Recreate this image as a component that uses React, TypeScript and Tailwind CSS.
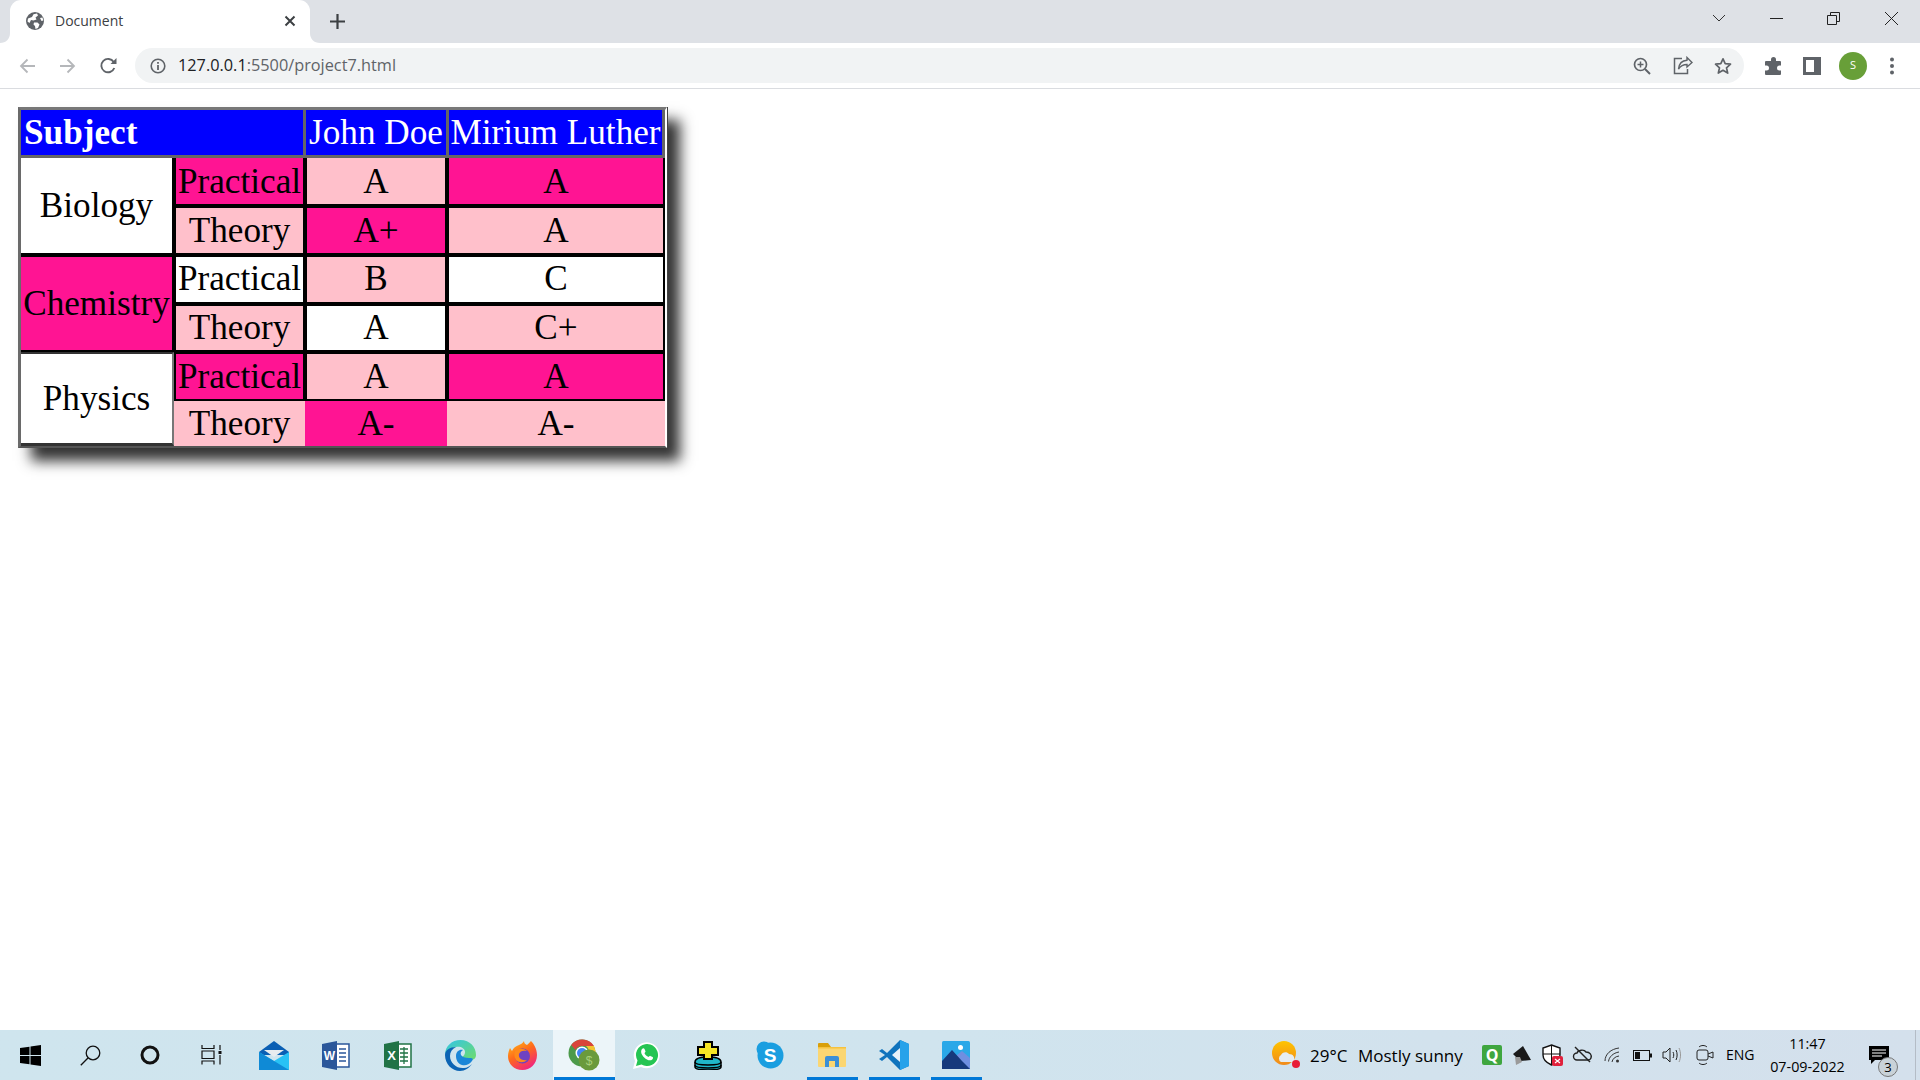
import React from "react";

const sans = "font-['Open_Sans','Noto_Sans',sans-serif]";

function Cell({ className = "", children, rowSpan, colSpan }: { className?: string; children?: React.ReactNode; rowSpan?: number; colSpan?: number }) {
  return (
    <td rowSpan={rowSpan} colSpan={colSpan} className={`p-0 text-center align-middle text-black border-solid ${className}`}>
      {children}
    </td>
  );
}

const inner = "border-x-2 border-y-2 border-black";
const first = "border-x-2 border-b-2 border-t-0 border-black";
const P = "bg-[#ff1493]";
const L = "bg-[#ffc0cb]";
const W = "bg-white";

function ResultsTable() {
  return (
    <table className="table-fixed w-[649px] border-separate border-spacing-0 border-solid border-l-[3px] border-t-[3px] border-b-[2px] border-r-[2px] border-l-[#6a6a6a] border-t-[#777777] border-b-[#555555] border-r-white shadow-[1px_0_0_#444444,13px_13px_13px_#333333] font-['Liberation_Serif',serif] text-[35.2px] leading-[40px]">
      <colgroup>
        <col className="w-[153px]" />
        <col className="w-[131px]" />
        <col className="w-[142px]" />
        <col className="w-[218px]" />
      </colgroup>
      <tbody>
        <tr className="h-[48px]">
          <th colSpan={2} className="p-0 pl-[3px] text-left font-bold text-white bg-[#0000ff] border-solid border-r-2 border-b-[3px] border-[#666666]">Subject</th>
          <th className="p-0 text-center font-normal text-white bg-[#0000ff] border-solid border-l border-r border-b-[3px] border-[#666666]">John Doe</th>
          <th className="p-0 text-center font-normal text-white bg-[#0000ff] border-solid border-l-2 border-r-[3px] border-b-[3px] border-[#666666]">Mirium Luther</th>
        </tr>
        <tr className="h-[48px]">
          <Cell rowSpan={2} className={`${W} border-r-2 border-b-2 border-black`}>Biology</Cell>
          <Cell className={`${P} ${first} pt-[2px]`}>Practical</Cell>
          <Cell className={`${L} ${first} pt-[2px]`}>A</Cell>
          <Cell className={`${P} ${first} pt-[2px]`}>A</Cell>
        </tr>
        <tr className="h-[49px]">
          <Cell className={`${L} ${inner}`}>Theory</Cell>
          <Cell className={`${P} ${inner}`}>A+</Cell>
          <Cell className={`${L} ${inner}`}>A</Cell>
        </tr>
        <tr className="h-[49px]">
          <Cell rowSpan={2} className={`${P} border-r-2 border-y-2 border-black`}>Chemistry</Cell>
          <Cell className={`${W} ${inner} pb-[2px]`}>Practical</Cell>
          <Cell className={`${L} ${inner} pb-[2px]`}>B</Cell>
          <Cell className={`${W} ${inner} pb-[2px]`}>C</Cell>
        </tr>
        <tr className="h-[48px]">
          <Cell className={`${L} ${inner}`}>Theory</Cell>
          <Cell className={`${W} ${inner}`}>A</Cell>
          <Cell className={`${L} ${inner}`}>C+</Cell>
        </tr>
        <tr className="h-[49px]">
          <Cell rowSpan={2} className={`${W} border-t-2 border-r-2 border-b-[3px] border-t-[#333333] border-r-[#777777] border-b-[#333333]`}>Physics</Cell>
          <Cell className={`${P} ${inner}`}>Practical</Cell>
          <Cell className={`${L} ${inner}`}>A</Cell>
          <Cell className={`${P} ${inner}`}>A</Cell>
        </tr>
        <tr className="h-[45px]">
          <Cell className={L}>Theory</Cell>
          <Cell className={P}>A-</Cell>
          <Cell className={L}>A-</Cell>
        </tr>
      </tbody>
    </table>
  );
}

function TabBar() {
  return (
    <div className="flex h-[43px] bg-[#dee1e6] items-stretch">
      <div className="w-[10px]" />
      <div className={`relative w-[300px] bg-white rounded-t-[11px] flex items-center pl-[16px] pb-[1px] ${sans}`}>
        <svg className="absolute left-[-10px] bottom-0" width="10" height="10" viewBox="0 0 10 10"><path d="M10 0V10H0C6 10 10 6 10 0Z" fill="#fff" /></svg>
        <svg className="absolute right-[-10px] bottom-0" width="10" height="10" viewBox="0 0 10 10"><path d="M0 0V10H10C4 10 0 6 0 0Z" fill="#fff" /></svg>
        <svg width="18" height="18" viewBox="0 0 18 18">
          <circle cx="9" cy="9" r="9" fill="#5f6368" />
          <path d="M2 6.500 6 5 7.500 2.200 11 1.500 12 3.500 9.500 5.500 10.500 7.500 7.500 8.500 5 8 3.500 11 1.500 9.500ZM8 10.500l3.500 0 2 2-1.500 3.500-2.500 1-.5-3-1.500-1.500ZM14 6l2.500-.5.800 3-1.800.5Z" fill="#fff" />
        </svg>
        <span className="ml-[11px] text-[14px] text-[#3c4043] leading-none pb-[1px]">Document</span>
        <svg className="ml-auto mr-[14px]" width="12" height="12" viewBox="0 0 12 12"><path d="M1.500 1.500 10.500 10.500M10.500 1.500 1.500 10.500" stroke="#3c4043" strokeWidth="2" /></svg>
      </div>
      <div className="w-[20px]" />
      <div className="flex items-center">
        <svg width="15" height="15" viewBox="0 0 15 15"><path d="M7.500 0V15M0 7.500H15" stroke="#3c4043" strokeWidth="2.200" /></svg>
      </div>
      <div className="ml-auto flex items-start">
        <svg className="mt-[13px] mr-[44px]" width="14" height="10" viewBox="0 0 14 10"><path d="M1 2 7 8 13 2" stroke="#333" fill="none" /></svg>
        <svg className="mt-[12px] mr-[44px]" width="13" height="13" viewBox="0 0 13 13"><path d="M0 6.500H13" stroke="#222" /></svg>
        <svg className="mt-[12px] mr-[45px]" width="13" height="13" viewBox="0 0 13 13" fill="none"><path d="M.5 3.500H9.500V12.500H.5ZM3.500 3.500V.5H12.500V9.500H9.500" stroke="#222" /></svg>
        <svg className="mt-[12px] mr-[22px]" width="13" height="13" viewBox="0 0 13 13"><path d="M0 0 13 13M13 0 0 13" stroke="#222" /></svg>
      </div>
    </div>
  );
}

function Toolbar() {
  const g = "#5f6368";
  return (
    <div className="flex items-center h-[46px] bg-white border-b border-[#dadce0]">
      <svg className="ml-[19px]" width="17" height="16" viewBox="0 0 17 16" fill="none"><path d="M16 8H2M8.500 1.500 2 8l6.500 6.500" stroke="#b5b7ba" strokeWidth="1.800" /></svg>
      <svg className="ml-[23px]" width="17" height="16" viewBox="0 0 17 16" fill="none"><path d="M1 8H15M8.500 1.500 15 8l-6.500 6.500" stroke="#b5b7ba" strokeWidth="1.800" /></svg>
      <svg className="ml-[24px]" width="17" height="17" viewBox="0 0 17 17" fill="none"><path d="M14.300 11a6.700 6.700 0 1 1-.6-6" stroke={g} strokeWidth="1.900" /><path d="M16.500 1v6h-6Z" fill={g} /></svg>
      <div className="ml-[18px] mr-[21px] flex-1 h-[35px] rounded-full bg-[#f1f3f4] flex items-center pl-[15px] pr-[12px]">
        <svg width="16" height="16" viewBox="0 0 16 16" fill="none"><circle cx="8" cy="8" r="6.800" stroke={g} strokeWidth="1.600" /><path d="M8 7v5M8 4v1.800" stroke={g} strokeWidth="1.800" /></svg>
        <span className={`ml-[12px] text-[16.3px] leading-none text-[#5f6368] ${sans}`}><span className="text-[#202124]">127.0.0.1</span>:5500/project7.html</span>
        <svg className="ml-auto" width="18" height="18" viewBox="0 0 18 18" fill="none"><circle cx="7.500" cy="7.500" r="6" stroke={g} strokeWidth="1.700" /><path d="M12 12l5 5" stroke={g} strokeWidth="2" /><path d="M7.500 4.500v6M4.500 7.500h6" stroke={g} strokeWidth="1.500" /></svg>
        <svg className="ml-[22px]" width="20" height="19" viewBox="0 0 20 19" fill="none"><path d="M14 1.500 19 6.500 14 11V8.500C9.500 8.500 7.500 10 5.500 13 6 8 9 4.500 14 4.200Z" stroke={g} strokeWidth="1.400" /><path d="M9 2.500H1.500V17.500H14.500V13" stroke={g} strokeWidth="1.500" /></svg>
        <svg className="ml-[21px]" width="18" height="18" viewBox="0 0 18 18" fill="none"><path d="M9 1.800l2.200 4.900 5.300.5-4 3.600 1.200 5.300L9 13.300l-4.700 2.800 1.200-5.300-4-3.600 5.300-.5Z" stroke={g} strokeWidth="1.700" strokeLinejoin="round" /></svg>
      </div>
      <svg width="18" height="18" viewBox="0 0 18 18"><path d="M6 2.500a2.500 2.500 0 0 1 5 0V4h4a1 1 0 0 1 1 1v3.500h-1.500a2.500 2.500 0 0 0 0 5H16V17a1 1 0 0 1-1 1H1a1 1 0 0 1-1-1v-3.500h1.500a2.500 2.500 0 0 0 0-5H0V5a1 1 0 0 1 1-1h5Z" fill={g} /></svg>
      <div className="ml-[20px] w-[18px] h-[18px] border-[3px] border-[#5f6368] flex justify-end"><div className="w-[4px] h-full bg-[#5f6368]" /></div>
      <div className={`ml-[18px] w-[28px] h-[28px] rounded-full bg-[#689f38] flex items-center justify-center text-white text-[11px] ${sans}`}>S</div>
      <svg className="ml-[23px] mr-[26px]" width="4" height="18" viewBox="0 0 4 18" fill={g}><circle cx="2" cy="2.500" r="2" /><circle cx="2" cy="9" r="2" /><circle cx="2" cy="15.500" r="2" /></svg>
    </div>
  );
}

function Item({ w, children, active, line }: { w: string; children: React.ReactNode; active?: boolean; line?: string }) {
  return (
    <div className={`relative h-full flex items-center justify-center shrink-0 ${w} ${active ? "bg-[#ecf5f9]" : ""}`}>
      {children}
      {line && <div className={`absolute bottom-0 h-[3px] bg-[#0078d7] ${line}`} />}
    </div>
  );
}

const appIcons = {
  mail: (
    <svg width="30" height="29" viewBox="0 0 30 29">
      <path d="M0 11 15 0l15 11v3H0Z" fill="#0a5fb4" />
      <path d="M5 9h20l-10 7Z" fill="#e8ecef" />
      <path d="M0 11l15 9 15-9v18H0Z" fill="#28c2f5" />
      <path d="M0 29V11l15 9 15 9Z" fill="#0f8ad6" />
    </svg>
  ),
  word: (
    <svg width="28" height="29" viewBox="0 0 28 29">
      <path d="M10 3h17v23H10Z" fill="#fff" stroke="#2b579a" strokeWidth="1.500" />
      <path d="M17 8h7M17 12h7M17 16h7M17 20h7" stroke="#2b579a" strokeWidth="1.600" />
      <path d="M0 3 15 0v29L0 26Z" fill="#2b579a" />
      <text x="7.500" y="19" textAnchor="middle" fontFamily="Liberation Sans" fontWeight="700" fontSize="12" fill="#fff">W</text>
    </svg>
  ),
  excel: (
    <svg width="28" height="29" viewBox="0 0 28 29">
      <path d="M12 3h15v23H12Z" fill="#fff" stroke="#217346" strokeWidth="1.500" />
      <path d="M16 8h8M16 12h8M16 16h8M16 20h8M20 6v17" stroke="#217346" strokeWidth="1.300" />
      <path d="M0 3 15 0v29L0 26Z" fill="#217346" />
      <text x="7.500" y="19" textAnchor="middle" fontFamily="Liberation Sans" fontWeight="700" fontSize="13" fill="#fff">X</text>
    </svg>
  ),
  edge: (
    <svg width="31" height="31" viewBox="0 0 31 31">
      <defs>
        <linearGradient id="edgeA" x1="0" y1="0" x2="1" y2="1"><stop offset="0" stopColor="#33c5e8" /><stop offset="1" stopColor="#6fdc6a" /></linearGradient>
      </defs>
      <path d="M0 15C0 6 7 0 15.500 0 25 0 31 7 31 15c0 3-2 5-6 5-3 0-8 0-8-2 0-2 3-2 3-6C20 8 15 6 11 7 5 8 0 12 0 15Z" fill="url(#edgeA)" />
      <path d="M0 15C0 10 5 7 11 7c-4 2-6 5-6 9 0 7 7 13 14 12 3 0 6-2 8-4-3 4-7 7-12 7C7 31 0 24 0 15Z" fill="#0c64b4" />
      <path d="M11 16c0-5 4-7 7-6-2 1-3 3-2 5s4 3 8 3c3 0 5 0 3 3-3 4-7 5-10 4-4-1-6-5-6-9Z" fill="#1a86d8" />
    </svg>
  ),
  firefox: (
    <svg width="29" height="29" viewBox="0 0 29 29">
      <defs>
        <linearGradient id="ffA" x1="0" y1="0" x2=".6" y2="1"><stop offset="0" stopColor="#ffc11a" /><stop offset=".5" stopColor="#ff6b1a" /><stop offset="1" stopColor="#f0287a" /></linearGradient>
      </defs>
      <path d="M14.500 29C6 29 0 23 0 15c0-3 1-6 2-8l2 3c1-3 4-5 7-6 2-1 4-2 5-4 0 2 1 3 3 4 2-2 3-3 4-4 3 3 6 8 6 14 0 9-7 15-14.500 15Z" fill="url(#ffA)" />
      <circle cx="14.500" cy="15" r="7.500" fill="#6f42c1" />
      <path d="M7 10c3-3 9-3 12 0-4-1-7 0-8 3-1 4 3 7 8 6-3 3-8 3-11 0-2-3-2-6-1-9Z" fill="#ff8a1a" />
    </svg>
  ),
  chrome: (
    <svg width="32" height="32" viewBox="0 0 32 32">
      <circle cx="14" cy="14" r="13.500" fill="#4c9a4a" />
      <path d="M14 .5A13.500 13.500 0 0 1 26 7H14a7 7 0 0 0-6.500 4L3.200 6A13.500 13.500 0 0 1 14 .5Z" fill="#d9453a" />
      <path d="M26 7a13.500 13.500 0 0 1-4 17l-2-10a6 6 0 0 0-2-7Z" fill="#f4c430" />
      <circle cx="14" cy="14" r="6.500" fill="#fff" />
      <circle cx="14" cy="14" r="5" fill="#4285f4" />
      <circle cx="21" cy="21" r="10.500" fill="#6a9a3c" />
      <text x="21" y="25.500" textAnchor="middle" fontFamily="Liberation Sans" fontSize="12" fill="#a8cf7a">$</text>
    </svg>
  ),
  whatsapp: (
    <svg width="27" height="27" viewBox="0 0 27 27">
      <path d="M0 27 2 19A13 13 0 1 1 8 25Z" fill="#fff" />
      <path d="M3 24 4.500 18.500A11 11 0 1 1 8.500 22.500Z" fill="#25c553" />
      <path d="M9 7c1-1 2-1 2.500 0l1 2.300c.2.600-.8 1.500-1 2 .8 1.600 2.200 2.900 4 3.700.6-.3 1.300-1.300 1.800-1.100l2.300 1.100c.8.500.4 1.800-.4 2.500-2 1.800-5.500.5-8-2-2.800-2.800-4-6-2.200-8.500Z" fill="#fff" />
    </svg>
  ),
  game: (
    <svg width="28" height="29" viewBox="0 0 28 29">
      <path d="M1 21c0-3 5-5 13-5s13 2 13 5v5c0 2-5 3-13 3S1 28 1 26Z" fill="#20b8c8" stroke="#000" strokeWidth="1.500" />
      <path d="M1 21c0 2 5 3 13 3s13-1 13-3M1 24c0 2 5 3 13 3s13-1 13-3" fill="none" stroke="#000" strokeWidth="1.500" />
      <path d="M10 1h8v5h6v8h-6v4h-8v-4H4V6h6Z" fill="#f5e626" stroke="#000" strokeWidth="2" />
    </svg>
  ),
  skype: (
    <svg width="28" height="28" viewBox="0 0 28 28">
      <circle cx="14.500" cy="14.500" r="13" fill="#1a9ee0" />
      <circle cx="8" cy="8" r="7.500" fill="#1a9ee0" />
      <text x="14" y="21" textAnchor="middle" fontFamily="Liberation Sans" fontWeight="700" fontSize="19" fill="#fff">S</text>
    </svg>
  ),
  files: (
    <svg width="28" height="24" viewBox="0 0 28 24">
      <path d="M0 1a1 1 0 0 1 1-1h9l3 4H0Z" fill="#d99f0a" />
      <path d="M0 4h28v19a1 1 0 0 1-1 1H1a1 1 0 0 1-1-1Z" fill="#fbd672" />
      <path d="M0 4h28v1.500H0Z" fill="#f6c23e" />
      <path d="M7 24V15a2 2 0 0 1 2-2h10a2 2 0 0 1 2 2v9h-4v-6h-6v6Z" fill="#3b8fd6" />
    </svg>
  ),
  vscode: (
    <svg width="30" height="30" viewBox="0 0 30 30">
      <path d="M21 0 30 4v22l-9 4L8 17l-5 4-3-2 6-4-6-4 3-2 5 4Z" fill="#0f73bd" />
      <path d="M21 0 30 4v22l-9 4Z" fill="#27a2ea" />
      <path d="M21 8v14l-8-7Z" fill="#fff" opacity=".9" />
    </svg>
  ),
  photos: (
    <svg width="28" height="28" viewBox="0 0 28 28">
      <rect width="28" height="28" rx="1.500" fill="#2aa8e8" />
      <circle cx="18.500" cy="6.500" r="2.500" fill="#fff" />
      <path d="M15 14l5-4 8 7v11H14Z" fill="#6f8fe0" />
      <path d="M0 20 10 9l10 11 8 8H0Z" fill="#16397c" />
    </svg>
  ),
};

function Taskbar() {
  return (
    <div className={`mt-auto h-[50px] flex items-stretch bg-gradient-to-r from-[#cfe5ee] via-[#d0e4ee] to-[#d4e0ec] text-black ${sans}`}>
      <Item w="w-[60px]">
        <svg width="21" height="21" viewBox="0 0 21 21" fill="#000"><path d="M0 3 9.500 1.700V10H0ZM10.500 1.500 21 0V10H10.500ZM0 11H9.500V19.300L0 18ZM10.500 11H21V21L10.500 19.500Z" /></svg>
      </Item>
      <Item w="w-[60px]">
        <svg width="21" height="21" viewBox="0 0 21 21" fill="none" stroke="#111" strokeWidth="1.300"><circle cx="13" cy="8" r="6.800" /><path d="M8.200 12.800.8 20.200" /></svg>
      </Item>
      <Item w="w-[60px]">
        <svg width="20" height="20" viewBox="0 0 20 20" fill="none"><circle cx="10" cy="10" r="8" stroke="#111" strokeWidth="3" /></svg>
      </Item>
      <Item w="w-[63px]">
        <svg width="22" height="20" viewBox="0 0 22 20" fill="none" stroke="#111" strokeWidth="1.200"><path d="M1 0v3.500h12V0M1 19.500V16h12v3.500M1 6h12v7.500H1ZM19 0v5M19 10v9.500" /><rect x="17.500" y="6" width="3" height="3" fill="#111" stroke="none" /></svg>
      </Item>
      <Item w="w-[62px]">{appIcons.mail}</Item>
      <Item w="w-[62px]">{appIcons.word}</Item>
      <Item w="w-[62px]">{appIcons.excel}</Item>
      <Item w="w-[62px]">{appIcons.edge}</Item>
      <Item w="w-[62px]">{appIcons.firefox}</Item>
      <Item w="w-[62px]" active line="left-[1px] right-0">{appIcons.chrome}</Item>
      <Item w="w-[62px]">{appIcons.whatsapp}</Item>
      <Item w="w-[62px]">{appIcons.game}</Item>
      <Item w="w-[62px]">{appIcons.skype}</Item>
      <Item w="w-[62px]" line="left-[6px] right-[5px]">{appIcons.files}</Item>
      <Item w="w-[62px]" line="left-[6px] right-[5px]">{appIcons.vscode}</Item>
      <Item w="w-[62px]" line="left-[6px] right-[5px]">{appIcons.photos}</Item>

      <div className="ml-[285px] flex items-center">
        <svg width="28" height="28" viewBox="0 0 28 28">
          <defs><linearGradient id="sun" x1="0" y1="0" x2="0" y2="1"><stop offset="0" stopColor="#ffc400" /><stop offset="1" stopColor="#f08a1c" /></linearGradient></defs>
          <circle cx="12" cy="12" r="12" fill="url(#sun)" />
          <path d="M9 21a4 4 0 0 1 0-7c1-3 6-4 8-1 4 0 6 3 5 6-.5 1.500-1.500 2-3 2Z" fill="#e6edf2" />
          <circle cx="24" cy="23" r="4" fill="#e81c36" />
        </svg>
        <span className="ml-[10px] w-[38px] text-[17px] whitespace-pre leading-none">29°C</span>
        <span className="ml-[10px] w-[105px] text-[17px] whitespace-pre leading-none">Mostly sunny</span>
      </div>
      <div className="ml-[19px] flex items-center">
        <div className="w-[20px] h-[20px] rounded-[2px] bg-[#3fa63f] flex items-center justify-center text-white text-[16px] font-bold leading-none">Q</div>
        <svg className="ml-[10px]" width="19" height="19" viewBox="0 0 19 19"><path d="M1 8 11 0l8 14-11 1Z" fill="#1a1a1a" /><path d="M3 11h5l2 5-6 3Z" fill="#9a9a9a" /></svg>
        <svg className="ml-[11px]" width="21" height="22" viewBox="0 0 21 22"><path d="M9.500 1 18 4v7c0 5-4 8-8.500 10C5 19 1 16 1 11V4Z" fill="#fff" stroke="#111" strokeWidth="1.400" /><path d="M9.500 1v20M1 10h17" stroke="#111" /><rect x="10" y="12" width="11" height="10" rx="2" fill="#e0213c" /><path d="M13 15l5 4M18 15l-5 4" stroke="#fff" strokeWidth="1.200" /></svg>
        <svg className="ml-[9px]" width="21" height="18" viewBox="0 0 21 18" fill="none" stroke="#222" strokeWidth="1.400"><path d="M5 14a3.500 3.500 0 0 1 0-7c1-3 7-4 9-1 4 0 6 3 5 6-.4 1.200-1.200 2-3 2Z" /><path d="M3 1l15 15" /></svg>
        <svg className="ml-[11px]" width="17" height="17" viewBox="0 0 17 17" fill="none" stroke="#333" strokeWidth="1"><path d="M1 14C1 7 7 2 15 1M4.500 14.500C5 10 9 6 15 5M8 15c.5-3 3-5.500 7-6" /><circle cx="13.500" cy="14" r="1.500" fill="#333" stroke="none" /></svg>
        <svg className="ml-[12px]" width="19" height="11" viewBox="0 0 19 11" fill="none"><rect x=".5" y=".5" width="16" height="10" stroke="#111" /><rect x="2" y="2" width="5" height="7" fill="#111" /><rect x="17" y="3.500" width="2" height="4" fill="#111" /></svg>
        <svg className="ml-[10px]" width="20" height="16" viewBox="0 0 20 16" fill="none" stroke="#222" strokeWidth="1"><path d="M1 5h3l4-4v14l-4-4H1ZM11 5c1 2 1 4 0 6M14 3c1.500 3 1.500 7 0 10" /><path d="M17 1c2 4 2 10 0 14" stroke="#999" /></svg>
        <svg className="ml-[14px]" width="19" height="22" viewBox="0 0 19 22" fill="none" stroke="#222" strokeWidth="1"><rect x="1" y="6" width="11" height="10" rx="2" /><path d="M12 10l5-2v6l-5-2M3 3c2-2 6-2 8 0M3 19c2 2 6 2 8 0" /></svg>
        <span className="ml-[11px] w-[28px] text-[14px] leading-none">ENG</span>
      </div>
      <div className="ml-[16px] w-[75px] flex flex-col items-center justify-center text-[14.3px] leading-[23px] whitespace-nowrap">
        <span>11:47</span>
        <span>07-09-2022</span>
      </div>
      <div className="relative ml-[24px] w-[46px] flex items-center justify-start">
        <svg width="20" height="18" viewBox="0 0 20 18"><path d="M0 0H20V14H6L2 18V14H0Z" fill="#000" /><path d="M3 4h14M3 7h14M3 10h10" stroke="#fff" strokeWidth="1" /></svg>
        <div className="absolute left-[9px] top-[27px] w-[20px] h-[20px] rounded-full bg-[#c9d2d8] border border-[#777] flex items-center justify-center text-[13px] leading-none">3</div>
      </div>
      <div className="w-px bg-[#b4bcc6]" />
    </div>
  );
}

export default function App() {
  return (
    <div className="w-[1920px] h-[1080px] overflow-hidden bg-white flex flex-col">
      <TabBar />
      <Toolbar />
      <main className="pl-[18px] pt-[18px]">
        <ResultsTable />
      </main>
      <Taskbar />
    </div>
  );
}
